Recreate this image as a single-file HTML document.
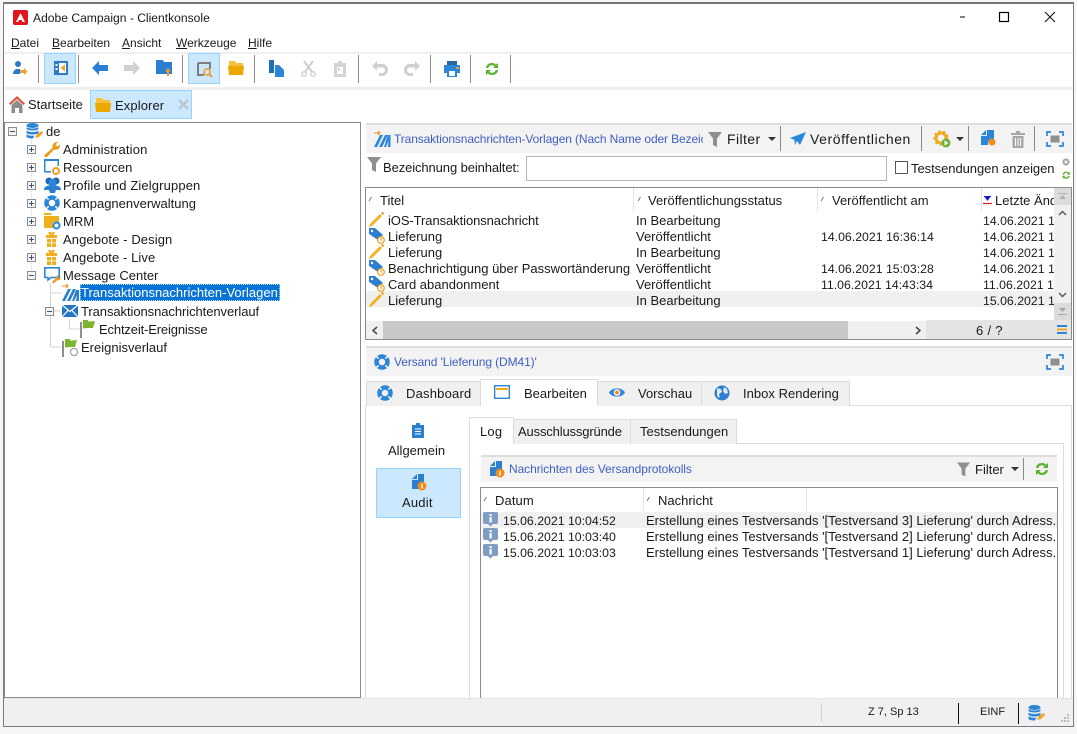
<!DOCTYPE html>
<html lang="de"><head><meta charset="utf-8"><title>Adobe Campaign</title>
<style>
html,body{margin:0;padding:0;width:1077px;height:734px;overflow:hidden;background:#f6f6f6}
body{font-family:"Liberation Sans",sans-serif;font-size:13px;color:#1a1a1a;position:relative}
.b{position:absolute;box-sizing:border-box}
.t{position:absolute;white-space:nowrap;line-height:16px;height:16px}
.r{height:15px;overflow:hidden}
.d{font-size:12.3px}
svg{position:absolute;overflow:visible}
u{text-decoration:underline}
.sep{position:absolute;width:1px;background:#8a8a8a}
.lnk{color:#3f5fc4}
</style></head><body>
<div class="b" style="left:3px;top:2px;width:1071px;height:725px;background:#fff;border:1px solid #7a7a7a;border-top:2px solid #777"></div>

<!-- title -->
<svg style="left:13px;top:10px" width="15" height="15" viewBox="0 0 15 15"><rect width="15" height="15" rx="2" fill="#e3141c"/><path d="M7.5 3 L12 12 H9.5 L8.6 10 H6.2 L7.5 7.5 L5 12 H3Z" fill="#fff"/></svg>
<div class="t" style="left:33px;top:10px;font-size:12.1px">Adobe Campaign - Clientkonsole</div>
<svg style="left:960px;top:0" width="117" height="30"><path d="M0 17H5" stroke="#000"/><rect x="39.5" y="12.5" width="9" height="9" fill="none" stroke="#000" stroke-width="1.2"/><path d="M85 12L95 22M95 12L85 22" stroke="#111" stroke-width="1.1"/></svg>

<!-- menu -->
<div class="t" style="left:11px;top:35px;font-size:12px"><u>D</u>atei</div>
<div class="t" style="left:52px;top:35px;font-size:12px"><u>B</u>earbeiten</div>
<div class="t" style="left:122px;top:35px;font-size:12px"><u>A</u>nsicht</div>
<div class="t" style="left:176px;top:35px;font-size:12px"><u>W</u>erkzeuge</div>
<div class="t" style="left:248px;top:35px;font-size:12px"><u>H</u>ilfe</div>

<!-- toolbar -->
<div class="b" style="left:4px;top:52px;width:1069px;height:2px;background:#f0f0f0"></div>
<div class="b" style="left:4px;top:87px;width:1069px;height:3px;background:#f0f0f0"></div>
<div class="b" style="left:44px;top:53px;width:32px;height:31px;background:#cce8ff;border:1px solid #99d1ff"></div>
<div class="b" style="left:188px;top:53px;width:32px;height:31px;background:#cce8ff;border:1px solid #99d1ff"></div>
<div class="sep" style="left:38px;top:55px;height:28px"></div>
<div class="sep" style="left:78px;top:55px;height:28px"></div>
<div class="sep" style="left:182px;top:55px;height:28px"></div>
<div class="sep" style="left:254px;top:55px;height:28px"></div>
<div class="sep" style="left:358px;top:55px;height:28px"></div>
<div class="sep" style="left:430px;top:55px;height:28px"></div>
<div class="sep" style="left:470px;top:55px;height:28px"></div>
<div class="sep" style="left:510px;top:55px;height:28px"></div>
<svg style="left:12px;top:60px" width="16" height="16"><circle cx="6" cy="4" r="3" fill="#2c7ad0"/><path d="M1 14c0-3 2-4 3-5h4v5z" fill="#2c7ad0"/><path d="M8 10h4V8l3.500 3.500L12 15v-2H8z" fill="#f0a030"/></svg>
<svg style="left:54px;top:61px" width="14" height="14"><rect width="14" height="14" fill="#2a7bc8"/><rect x="5" y="2" width="7" height="10" fill="#fff"/><path d="M11 3.500V10.500L6.500 7z" fill="#f2a32c"/><rect x="1.500" y="3" width="2" height="2" fill="#fff"/><rect x="1.500" y="7" width="2" height="2" fill="#fff"/></svg>
<svg style="left:92px;top:61px" width="16" height="14"><path d="M0 7L7 0V4H16V10H7V14Z" fill="#2c7ed4"/></svg>
<svg style="left:124px;top:61px" width="16" height="14"><path d="M16 7L9 0V4H0V10H9V14Z" fill="#d0d0d0"/></svg>
<svg style="left:156px;top:60px" width="16" height="16"><path d="M0 0H7L8 2H16V14H0Z" fill="#2c7ed4"/><path d="M12 8l3 3.500h-2V16h-2v-4.500H9z" fill="#f29a1c"/></svg>
<svg style="left:197px;top:62px" width="16" height="16"><path d="M1 1H13V7M7 13H1V1" fill="none" stroke="#7d7d7d" stroke-width="2"/><circle cx="10" cy="10" r="3" fill="none" stroke="#ef9a1a" stroke-width="1.500"/><path d="M12 12l3 3" stroke="#ef9a1a" stroke-width="1.800"/></svg>
<svg style="left:228px;top:61px" width="16" height="14"><path d="M1 0H7L8 2H15V6H1Z" fill="#f6c03a"/><path d="M0 5H16L15 14H1Z" fill="#eaa800"/></svg>
<svg style="left:269px;top:60px" width="15" height="17"><path d="M0 0H5V13H0Z" fill="#1f6fb8"/><path d="M6 5H10L15 10V17H6Z" fill="#2c86d8"/></svg>
<svg style="left:301px;top:61px" width="15" height="16"><path d="M3 0L11 11M12 0L4 11" stroke="#cfcfcf" stroke-width="2"/><circle cx="3" cy="13" r="2.200" fill="none" stroke="#cfcfcf" stroke-width="1.300"/><circle cx="12" cy="13" r="2.200" fill="none" stroke="#cfcfcf" stroke-width="1.300"/></svg>
<svg style="left:334px;top:61px" width="12" height="16"><path d="M0 2H4V0H8V2H12V16H0Z" fill="#d4d4d4"/><rect x="3" y="6" width="6" height="7" fill="#fff"/><rect x="4" y="7" width="2" height="3" fill="#d4d4d4"/></svg>
<svg style="left:372px;top:61px" width="16" height="15"><path d="M0 5L5 0V3H10C14 3 16 6 16 9C16 12 14 15 10 15H7V12H10C12 12 13 10.500 13 9C13 7.500 12 6.500 10 6.500H5V10Z" fill="#d0d0d0"/></svg>
<svg style="left:404px;top:61px" width="16" height="15"><path d="M16 5L11 0V3H6C2 3 0 6 0 9C0 12 2 15 6 15H9V12H6C4 12 3 10.500 3 9C3 7.500 4 6.500 6 6.500H11V10Z" fill="#d0d0d0"/></svg>
<svg style="left:444px;top:61px" width="16" height="16"><rect x="3" y="0" width="10" height="4" fill="#2468a8"/><path d="M0 4H16V12H13V9H3V12H0Z" fill="#2c86d8"/><rect x="12" y="6" width="3" height="2" fill="#f0a030"/><path d="M3 9H13V16H3Z" fill="#2c86d8"/><rect x="5" y="10" width="6" height="5" fill="#fff"/></svg>
<svg style="left:485px;top:62px" width="14" height="14" viewBox="0 0 14 14"><path d="M1 6C1.500 2.500 4 1 7 1c2 0 3.200 .8 4 1.800L13 1V6H8l1.700-1.600C9 3.600 8.200 3.200 7 3.200 5 3.200 3.800 4.300 3.300 6Z" fill="#5cb030"/><path d="M13 8C12.500 11.500 10 13 7 13c-2 0-3.200-.8-4-1.800L1 13V8H6L4.300 9.600C5 10.400 5.800 10.800 7 10.800c2 0 3.200-1.100 3.700-2.800Z" fill="#5cb030"/></svg>

<!-- doc tabs -->
<svg style="left:9px;top:96px" width="16" height="17"><path d="M8 0L0 7.500 1.500 9 8 3 14.500 9 16 7.500Z" fill="#e0533c"/><path d="M2.500 9L8 4 13.500 9V17H10V12H6V17H2.500Z" fill="#8c8c8c"/></svg>
<div class="t" style="left:28px;top:97px">Startseite</div>
<div class="b" style="left:90px;top:90px;width:102px;height:29px;background:#cce8ff;border:1px solid #99d1ff"></div>
<svg style="left:95px;top:98px" width="16" height="14"><path d="M1 0H7L8 2H15V6H1Z" fill="#f6c03a"/><path d="M0 5H16L15 14H1Z" fill="#eaa800"/></svg>
<div class="t" style="left:115px;top:98px;letter-spacing:.1px">Explorer</div>
<svg style="left:178px;top:99px" width="11" height="11"><path d="M1 1L10 10M10 1L1 10" stroke="#bcc7cf" stroke-width="2.400"/></svg>

<!-- left tree -->
<div class="b" style="left:4px;top:122px;width:357px;height:576px;border:1px solid #8a8a8a;background:#fff"></div>
<svg style="left:0;top:0" width="360" height="360" stroke="#d4d4d4" fill="none">
<path d="M31.500 139V275" stroke-dasharray="1 1"/>
<path d="M50.500 283V347M50.500 293H62M50.500 311H60M50.500 347H62M69.500 319V329H80" stroke-width="1"/>
</svg>
<svg width="0" height="0"><defs>
<g id="pl"><rect x=".5" y=".5" width="8" height="8" fill="#f4f4f4" stroke="#8c8c8c"/><path d="M2 4.500H7M4.500 2V7" stroke="#33537a"/></g>
<g id="mi"><rect x=".5" y=".5" width="8" height="8" fill="#f4f4f4" stroke="#8c8c8c"/><path d="M2 4.500H7" stroke="#33537a"/></g>
<g id="gift"><path d="M4 0H7L7.500 2 8 0H11L9.500 3H13V6H2V3H5.500Z" fill="#f2ad1a"/><rect x="3" y="7" width="9" height="8" fill="#f2ad1a"/><rect x="7" y="7" width="1" height="8" fill="#fff"/><rect x="3" y="10.500" width="9" height=".8" fill="#fff"/></g>
<g id="tag"><path d="M0 0H6L14 7 9 12 0 6Z" fill="#2c80cf"/><circle cx="3" cy="3" r="1.200" fill="#fff"/><circle cx="12" cy="12" r="3.300" fill="#fff" stroke="#f29a1c" stroke-width="1.200"/><path d="M12 10V12H13.500" stroke="#f29a1c" fill="none"/></g>
<g id="pen"><path d="M0 15L1 12 11 2 13 4 3 14Z" fill="#f2b21f"/><path d="M12 1L13.500 0 15 1.500 14 3Z" fill="#e08a10"/></g>
<g id="info"><path d="M2 0H13C14.500 0 15 .7 15 2V10C15 11.300 14.500 12 13 12H10L7.500 14.500 5 12H2C.7 12 0 11.300 0 10V2C0 .7 .7 0 2 0Z" fill="#7f9cc4"/><rect x="6.500" y="5" width="2.200" height="5.500" fill="#fff"/><rect x="6.500" y="2" width="2.200" height="2" fill="#fff"/></g>
<g id="ring"><circle cx="8" cy="8" r="5.500" fill="none" stroke="#2c86d8" stroke-width="4.500"/><path d="M8 0V3.200M8 12.800V16M0 8H3.200M12.800 8H16" stroke="#fff" stroke-width="1.500" transform="rotate(45 8 8)"/></g>
<g id="fs"><path d="M0 4V0H4M12 0H16V4M16 10V14H12M4 14H0V10" fill="none" stroke="#2c86d8" stroke-width="1.700"/><rect x="3.500" y="3.500" width="9" height="7" fill="#8f8f8f"/></g>
<g id="filt"><path d="M0 0H14L9 6.500V15L5 13V6.500Z" fill="#8f8f8f"/></g>
<g id="flag"><rect x="0" y="2" width="2" height="16" fill="#8f8f8f"/><path d="M3 0H8V1.500H10L15 1 13 8H8L3 8.500Z" fill="#7fb52e"/></g>
</defs></svg>
<svg style="left:8px;top:127px" width="9" height="9"><use href="#mi"/></svg>
<svg style="left:27px;top:145px" width="9" height="9"><use href="#pl"/></svg>
<svg style="left:27px;top:163px" width="9" height="9"><use href="#pl"/></svg>
<svg style="left:27px;top:181px" width="9" height="9"><use href="#pl"/></svg>
<svg style="left:27px;top:199px" width="9" height="9"><use href="#pl"/></svg>
<svg style="left:27px;top:217px" width="9" height="9"><use href="#pl"/></svg>
<svg style="left:27px;top:235px" width="9" height="9"><use href="#pl"/></svg>
<svg style="left:27px;top:253px" width="9" height="9"><use href="#pl"/></svg>
<svg style="left:27px;top:271px" width="9" height="9"><use href="#mi"/></svg>
<svg style="left:45px;top:307px" width="9" height="9"><use href="#mi"/></svg>

<svg style="left:26px;top:123px" width="17" height="16"><ellipse cx="6.500" cy="2.500" rx="6" ry="2.500" fill="#2c86d8"/><path d="M.5 4c2 2 10 2 12 0V6c-2 2-10 2-12 0zM.5 7.500c2 2 10 2 12 0V10c-2 2-10 2-12 0zM.5 11c2 2 6 2 8 1.500L7 15.500C4 15.500 .5 15 .5 13.500z" fill="#2c86d8"/><path d="M9 15L11 11 16 8 17 10 13 14Z" fill="#f2a41f"/></svg>
<div class="t" style="left:46px;top:124px">de</div>
<svg style="left:44px;top:141px" width="17" height="17"><path d="M1 16L0 14.500 8.500 7C8 4 9.500 .5 14 1L11.500 3.500 13.500 5.500 16 3.500C16.500 7.500 13 9.500 10 8.500L2.500 16.500Z" fill="#ef9a1a"/></svg>
<div class="t" style="left:63px;top:142px;letter-spacing:.15px">Administration</div>
<svg style="left:44px;top:159px" width="17" height="17"><path d="M0 0H15V2H0ZM0 2H1.500V12H7V13.500H0ZM13.500 2H15V7H13.500Z" fill="#2c86d8"/><circle cx="12" cy="12" r="3" fill="none" stroke="#f0a020" stroke-width="2"/></svg>
<div class="t" style="left:63px;top:160px">Ressourcen</div>
<svg style="left:44px;top:177px" width="17" height="16"><circle cx="5" cy="4" r="3.500" fill="#1d68b4"/><circle cx="12" cy="4" r="3.500" fill="#1d68b4"/><circle cx="8.500" cy="6" r="4" fill="#2c86d8"/><path d="M0 13C0 10 2 9 5 8.500H12C15 9 17 10 17 13L12 13 11 16H6L5 13Z" fill="#2c7ed0"/></svg>
<div class="t" style="left:63px;top:178px;letter-spacing:.13px">Profile und Zielgruppen</div>
<svg style="left:44px;top:195px" width="16" height="16"><use href="#ring"/></svg>
<div class="t" style="left:63px;top:196px">Kampagnenverwaltung</div>
<svg style="left:44px;top:213px" width="17" height="17"><path d="M0 0H7L8 2H0ZM0 3H15V9H9V15H0Z" fill="#f0b01e"/><circle cx="12.500" cy="12.500" r="3" fill="#fff" stroke="#2c86d8" stroke-width="2"/></svg>
<div class="t" style="left:63px;top:214px">MRM</div>
<svg style="left:44px;top:232px" width="16" height="16"><use href="#gift"/></svg>
<div class="t" style="left:63px;top:232px;letter-spacing:.1px">Angebote - Design</div>
<svg style="left:44px;top:250px" width="16" height="16"><use href="#gift"/></svg>
<div class="t" style="left:63px;top:250px;letter-spacing:.08px">Angebote - Live</div>
<svg style="left:44px;top:267px" width="17" height="16"><path d="M.8 .8H15.200V10.500H7L4 13V10.500H.8Z" fill="#fff" stroke="#2c86d8" stroke-width="1.600"/><path d="M8 15L12 11C11.500 9.500 13 8 15 8.500L13.500 10 15 11.500 16.500 10.500C17 12.500 15 14 13.500 13L9.500 16.500Z" fill="#ef9a1a"/></svg>
<div class="t" style="left:63px;top:268px">Message Center</div>
<svg style="left:62px;top:284px" width="17" height="18"><path d="M0 2H5M4 0L6 2 4 4" stroke="#ef8a1a" fill="none"/><path d="M0 17L6 5H9L3 17ZM5 17L11 5H14L8 17ZM10 17L14 6H17V17H14L15 11 12 17Z" fill="#2c7ed0"/></svg>
<div class="b" style="left:80px;top:284px;width:200px;height:17px;background:#0a74d6;outline:1px dotted #bfe0ff;outline-offset:-1px"></div>
<div class="t" style="left:81px;top:285px;color:#fff">Transaktionsnachrichten-Vorlagen</div>
<svg style="left:62px;top:305px" width="16" height="12"><rect width="16" height="12" fill="#2476c4"/><path d="M0 0L8 6.500 16 0M0 12L6 5.500M16 12L10 5.500" stroke="#fff" fill="none" stroke-width="1.200"/></svg>
<div class="t" style="left:81px;top:304px;letter-spacing:-.07px">Transaktionsnachrichtenverlauf</div>
<svg style="left:80px;top:320px" width="16" height="18"><use href="#flag"/></svg>
<div class="t" style="left:99px;top:322px;letter-spacing:-.15px">Echtzeit-Ereignisse</div>
<svg style="left:62px;top:339px" width="17" height="18"><use href="#flag"/><circle cx="12" cy="13" r="3.500" fill="#fff" stroke="#8f8f8f"/></svg>
<div class="t" style="left:81px;top:340px">Ereignisverlauf</div>

<!-- upper right -->
<div class="b" style="left:366px;top:123px;width:706px;height:2px;background:#dedede"></div>
<div class="b" style="left:366px;top:125px;width:706px;height:28px;background:#f3f3f3"></div>
<svg style="left:374px;top:131px" width="17" height="17"><path d="M0 2H5M4 0L6 2 4 4" stroke="#ef8a1a" fill="none"/><path d="M0 16L6 4H9L3 16ZM5 16L11 4H14L8 16ZM10 16L14 4H16.500V16H14L14.500 10 12 16Z" fill="#2c86d8"/></svg>
<div class="b" style="left:394px;top:131px;width:309px;height:16px;overflow:hidden"><div class="t lnk" style="left:0;top:0;font-size:12px;letter-spacing:-.12px">Transaktionsnachrichten-Vorlagen (Nach Name oder Bezeichnung)</div></div>
<svg style="left:708px;top:132px" width="14" height="15"><use href="#filt"/></svg>
<div class="t" style="left:727px;top:131px;font-size:14px;letter-spacing:.4px">Filter</div>
<svg style="left:768px;top:137px" width="8" height="5"><path d="M0 0H8L4 4Z" fill="#333"/></svg>
<div class="sep" style="left:780px;top:126px;height:25px"></div>
<svg style="left:790px;top:132px" width="16" height="14"><path d="M0 6L16 0 10 13 7 9 5 13 4.500 8Z" fill="#2c86d8"/></svg>
<div class="t" style="left:810px;top:131px;font-size:14px;letter-spacing:.57px">Veröffentlichen</div>
<div class="sep" style="left:921px;top:126px;height:25px"></div>
<svg style="left:934px;top:131px" width="17" height="17"><circle cx="7" cy="7" r="5" fill="none" stroke="#f0ac1e" stroke-width="3"/><circle cx="7" cy="7" r="7" fill="none" stroke="#f0ac1e" stroke-width="1.500" stroke-dasharray="2.500 2.500"/><circle cx="12" cy="12" r="4.500" fill="#6cb33c"/><path d="M10.500 9.500L14.500 12 10.500 14.500Z" fill="#fff"/></svg>
<svg style="left:956px;top:137px" width="8" height="5"><path d="M0 0H8L4 4Z" fill="#333"/></svg>
<div class="sep" style="left:968px;top:126px;height:25px"></div>
<svg style="left:981px;top:130px" width="15" height="18"><path d="M0 5L5 0V5ZM6 0H13V9A5 5 0 0 0 7 15H0V6H6Z" fill="#2c86d8"/><circle cx="11" cy="12" r="3.500" fill="#f08c1a"/></svg>
<svg style="left:1011px;top:131px" width="14" height="17"><path d="M5 0H9V2H14V4H0V2H5ZM1.500 5H12.500V17H1.500Z" fill="#a8a8a8"/><path d="M4.500 7V15M7 7V15M9.500 7V15" stroke="#fff"/></svg>
<div class="sep" style="left:1034px;top:126px;height:25px"></div>
<svg style="left:1047px;top:132px" width="16" height="14"><use href="#fs"/></svg>

<svg style="left:367px;top:157px" width="14" height="15"><use href="#filt"/></svg>
<div class="t" style="left:383px;top:160px;letter-spacing:-.1px">Bezeichnung beinhaltet:</div>
<div class="b" style="left:526px;top:156px;width:361px;height:25px;border:1px solid #b4b4b4;background:#fff"></div>
<div class="b" style="left:895px;top:161px;width:13px;height:13px;border:1px solid #555;background:#fff"></div>
<div class="t" style="left:911px;top:161px;letter-spacing:-.05px">Testsendungen anzeigen</div>
<svg style="left:1062px;top:158px" width="9" height="22"><circle cx="4" cy="4" r="3.500" fill="#a0a0a0"/><path d="M2.500 2.500L5.500 5.500M5.500 2.500L2.500 5.500" stroke="#fff"/><g transform="translate(0 13) scale(.6)"><path d="M1 6C1.500 2.500 4 1 7 1c2 0 3.200 .8 4 1.800L13 1V6H8l1.700-1.600C9 3.600 8.200 3.200 7 3.200 5 3.200 3.800 4.300 3.300 6Z" fill="#5cb030"/><path d="M13 8C12.500 11.500 10 13 7 13c-2 0-3.200-.8-4-1.800L1 13V8H6L4.300 9.600C5 10.400 5.800 10.800 7 10.800c2 0 3.200-1.100 3.700-2.800Z" fill="#5cb030"/></g></svg>

<div class="b" style="left:365px;top:187px;width:707px;height:153px;border:1px solid #8a8a8a;background:#fff"></div>
<div class="b" style="left:633px;top:188px;width:1px;height:23px;background:#e3e3e3"></div>
<div class="b" style="left:817px;top:188px;width:1px;height:23px;background:#e3e3e3"></div>
<div class="b" style="left:981px;top:188px;width:1px;height:23px;background:#e3e3e3"></div>
<svg style="left:368px;top:196px" width="700" height="8" stroke="#777" fill="none"><path d="M1 5L3.500 1M270 5L272.500 1M453 5L455.500 1"/></svg>
<div class="t" style="left:380px;top:193px">Titel</div>
<div class="t" style="left:648px;top:193px">Veröffentlichungsstatus</div>
<div class="t" style="left:832px;top:193px">Veröffentlicht am</div>
<svg style="left:983px;top:196px" width="9" height="9"><path d="M1 0H8L4.500 5Z" fill="#1414d8"/><path d="M1 0H8V1H1Z" fill="#1414d8"/><path d="M0 7.500H9" stroke="#e81818" stroke-width="1.200"/></svg>
<div class="b" style="left:995px;top:193px;width:59px;height:16px;overflow:hidden"><div class="t" style="left:0;top:0">Letzte Änderung</div></div>
<div class="b" style="left:366px;top:291px;width:688px;height:16px;background:#f0f0f0"></div>
<svg style="left:369px;top:212px" width="16" height="16"><use href="#pen"/></svg>
<svg style="left:369px;top:228px" width="16" height="16"><use href="#tag"/></svg>
<svg style="left:369px;top:244px" width="16" height="16"><use href="#pen"/></svg>
<svg style="left:369px;top:260px" width="16" height="16"><use href="#tag"/></svg>
<svg style="left:369px;top:276px" width="16" height="16"><use href="#tag"/></svg>
<svg style="left:369px;top:292px" width="16" height="16"><use href="#pen"/></svg>
<div class="t r" style="left:388px;top:213px;letter-spacing:-.08px">iOS-Transaktionsnachricht</div>
<div class="t r" style="left:388px;top:229px">Lieferung</div>
<div class="t r" style="left:388px;top:245px">Lieferung</div>
<div class="t r" style="left:388px;top:261px">Benachrichtigung über Passwortänderung</div>
<div class="t r" style="left:388px;top:277px">Card abandonment</div>
<div class="t r" style="left:388px;top:293px">Lieferung</div>
<div class="t r" style="left:636px;top:213px">In Bearbeitung</div>
<div class="t r" style="left:636px;top:229px">Veröffentlicht</div>
<div class="t r" style="left:636px;top:245px">In Bearbeitung</div>
<div class="t r" style="left:636px;top:261px">Veröffentlicht</div>
<div class="t r" style="left:636px;top:277px">Veröffentlicht</div>
<div class="t r" style="left:636px;top:293px">In Bearbeitung</div>
<div class="t r d" style="left:821px;top:229px">14.06.2021 16:36:14</div>
<div class="t r d" style="left:821px;top:261px">14.06.2021 15:03:28</div>
<div class="t r d" style="left:821px;top:277px">11.06.2021 14:43:34</div>
<div class="b d" style="left:983px;top:212px;width:71px;height:96px;overflow:hidden">
<div class="t" style="left:0;top:1px">14.06.2021 16:36</div><div class="t" style="left:0;top:17px">14.06.2021 16:36</div><div class="t" style="left:0;top:33px">14.06.2021 16:36</div><div class="t" style="left:0;top:49px">14.06.2021 15:03</div><div class="t" style="left:0;top:65px">11.06.2021 14:43</div><div class="t" style="left:0;top:81px">15.06.2021 10:04</div></div>
<!-- v scroll -->
<div class="b" style="left:1054px;top:188px;width:17px;height:132px;background:#f0f0f0"></div>
<div class="b" style="left:1054px;top:188px;width:17px;height:17px;background:#dcdcdc"></div>
<div class="b" style="left:1054px;top:303px;width:17px;height:17px;background:#dcdcdc"></div>
<svg style="left:1054px;top:188px" width="17" height="132" fill="none"><path d="M4 5.500H13" stroke="#b0b0b0"/><path d="M5 11H12L8.500 7Z" fill="#b0b0b0"/><path d="M5 27L8.500 23.500 12 27" stroke="#555" stroke-width="1.400"/><path d="M5 105L8.500 108.500 12 105" stroke="#555" stroke-width="1.400"/><path d="M5 120H12L8.500 124Z" fill="#a8a8a8"/><path d="M4 126.500H13" stroke="#a8a8a8"/></svg>
<!-- h scroll -->
<div class="b" style="left:366px;top:321px;width:705px;height:18px;background:#f0f0f0"></div>
<div class="b" style="left:383px;top:321px;width:465px;height:18px;background:#c8c8c8"></div>
<div class="b" style="left:926px;top:320px;width:145px;height:19px;background:#e4e4e4"></div>
<svg style="left:371px;top:326px" width="8" height="9" fill="none"><path d="M6 1L2 4.500 6 8" stroke="#444" stroke-width="1.500"/></svg>
<svg style="left:914px;top:326px" width="8" height="9" fill="none"><path d="M2 1L6 4.500 2 8" stroke="#444" stroke-width="1.500"/></svg>
<div class="t" style="left:976px;top:323px;letter-spacing:.3px">6 / ?</div>
<svg style="left:1057px;top:325px" width="10" height="9"><rect width="10" height="2" fill="#2c86d8"/><rect y="3.500" width="10" height="2" fill="#f0ac1e"/><rect y="7" width="10" height="2" fill="#2c86d8"/></svg>

<!-- lower -->
<div class="b" style="left:366px;top:346px;width:706px;height:2px;background:#dedede"></div>
<div class="b" style="left:366px;top:348px;width:706px;height:28px;background:#f3f3f3"></div>
<svg style="left:374px;top:354px" width="16" height="16"><use href="#ring"/></svg>
<div class="t lnk" style="left:394px;top:354px;font-size:12px;letter-spacing:-.1px">Versand 'Lieferung (DM41)'</div>
<svg style="left:1047px;top:355px" width="16" height="14"><use href="#fs"/></svg>

<div class="b" style="left:365px;top:405px;width:707px;height:294px;border:1px solid #dcdcdc;border-bottom:0;background:#fff"></div>
<div class="b" style="left:366px;top:381px;width:115px;height:25px;background:#f0f0f0;border:1px solid #dcdcdc;border-bottom:0"></div>
<div class="b" style="left:597px;top:381px;width:105px;height:25px;background:#f0f0f0;border:1px solid #dcdcdc;border-bottom:0"></div>
<div class="b" style="left:701px;top:381px;width:149px;height:25px;background:#f0f0f0;border:1px solid #dcdcdc;border-bottom:0"></div>
<div class="b" style="left:480px;top:379px;width:118px;height:27px;background:#fff;border:1px solid #dcdcdc;border-bottom:0"></div>
<svg style="left:377px;top:385px" width="16" height="16"><use href="#ring"/></svg>
<div class="t" style="left:406px;top:386px;letter-spacing:.2px">Dashboard</div>
<svg style="left:494px;top:385px" width="16" height="14"><rect x=".7" y=".7" width="14.600" height="12.600" fill="#fff" stroke="#2c86d8" stroke-width="1.400"/><rect x="2" y="3" width="12" height="2" fill="#f0ac1e"/></svg>
<div class="t" style="left:524px;top:386px">Bearbeiten</div>
<svg style="left:609px;top:387px" width="16" height="11"><path d="M0 5.500C3 0 13 0 16 5.500 13 11 3 11 0 5.500Z" fill="#2c86d8"/><circle cx="8" cy="5.500" r="3.300" fill="#fff"/><circle cx="8" cy="5.500" r="2" fill="#f08c1a"/></svg>
<div class="t" style="left:638px;top:386px">Vorschau</div>
<svg style="left:714px;top:385px" width="16" height="16"><circle cx="8" cy="8" r="7.500" fill="#2c7ed0"/><path d="M3 3L7 4 8 7 5 9 6 13 3 11ZM10 2L13 4 14 8 11 9 9 6Z" fill="#dfeaf5"/></svg>
<div class="t" style="left:743px;top:386px;letter-spacing:.03px">Inbox Rendering</div>

<svg style="left:412px;top:423px" width="13" height="16"><path d="M0 2H4V0H8V2H12V15H0Z" fill="#2c7ed0"/><path d="M3 6H9M3 8.500H9M3 11H9" stroke="#fff"/></svg>
<div class="t" style="left:388px;top:443px">Allgemein</div>
<div class="b" style="left:376px;top:468px;width:85px;height:50px;background:#cce8ff;border:1px solid #99d1ff"></div>
<svg style="left:412px;top:474px" width="15" height="17"><path d="M0 5L5 0V5ZM6 0H12V9A5 5 0 0 0 7 15H0V6H6Z" fill="#2c7ed0"/><circle cx="10" cy="12" r="4.500" fill="#f08c1a"/><rect x="9.300" y="10" width="1.400" height="4.500" fill="#fff"/></svg>
<div class="t" style="left:402px;top:495px;letter-spacing:.2px">Audit</div>

<div class="b" style="left:469px;top:443px;width:595px;height:256px;border:1px solid #dcdcdc;border-bottom:0;background:#fff"></div>
<div class="b" style="left:513px;top:419px;width:118px;height:25px;background:#f0f0f0;border:1px solid #dcdcdc;border-bottom:0"></div>
<div class="b" style="left:630px;top:419px;width:107px;height:25px;background:#f0f0f0;border:1px solid #dcdcdc;border-bottom:0"></div>
<div class="b" style="left:469px;top:417px;width:45px;height:27px;background:#fff;border:1px solid #dcdcdc;border-bottom:0"></div>
<div class="t" style="left:480px;top:424px;letter-spacing:.2px">Log</div>
<div class="t" style="left:518px;top:424px;letter-spacing:-.15px">Ausschlussgründe</div>
<div class="t" style="left:640px;top:424px">Testsendungen</div>

<div class="b" style="left:481px;top:455px;width:576px;height:2px;background:#dedede"></div>
<div class="b" style="left:481px;top:457px;width:576px;height:25px;background:#f3f3f3"></div>
<svg style="left:490px;top:461px" width="15" height="17"><path d="M0 5L5 0V5ZM6 0H12V9A5 5 0 0 0 7 15H0V6H6Z" fill="#2c7ed0"/><circle cx="10" cy="12" r="4.500" fill="#f08c1a"/><rect x="9.300" y="10" width="1.400" height="4.500" fill="#fff"/></svg>
<div class="t lnk" style="left:509px;top:461px;font-size:12px;letter-spacing:-.08px">Nachrichten des Versandprotokolls</div>
<svg style="left:957px;top:462px" width="13" height="15" viewBox="0 0 14 15"><use href="#filt"/></svg>
<div class="t" style="left:975px;top:462px">Filter</div>
<svg style="left:1011px;top:467px" width="8" height="5"><path d="M0 0H8L4 4Z" fill="#333"/></svg>
<div class="sep" style="left:1023px;top:458px;height:22px"></div>
<svg style="left:1035px;top:462px" width="14" height="14" viewBox="0 0 14 14"><path d="M1 6C1.500 2.500 4 1 7 1c2 0 3.200 .8 4 1.800L13 1V6H8l1.700-1.600C9 3.600 8.200 3.200 7 3.200 5 3.200 3.800 4.300 3.300 6Z" fill="#5cb030"/><path d="M13 8C12.500 11.500 10 13 7 13c-2 0-3.200-.8-4-1.800L1 13V8H6L4.300 9.600C5 10.400 5.800 10.800 7 10.800c2 0 3.200-1.100 3.700-2.800Z" fill="#5cb030"/></svg>

<div class="b" style="left:480px;top:487px;width:578px;height:212px;border:1px solid #8a8a8a;border-bottom:0;background:#fff"></div>
<div class="b" style="left:643px;top:488px;width:1px;height:23px;background:#e3e3e3"></div>
<div class="b" style="left:806px;top:488px;width:1px;height:23px;background:#e3e3e3"></div>
<svg style="left:483px;top:496px" width="180" height="8" stroke="#777" fill="none"><path d="M1 5L3.500 1M164 5L166.500 1"/></svg>
<div class="t" style="left:495px;top:493px;letter-spacing:.1px">Datum</div>
<div class="t" style="left:658px;top:493px">Nachricht</div>
<div class="b" style="left:481px;top:512px;width:576px;height:16px;background:#f0f0f0"></div>
<svg style="left:483px;top:512px" width="15" height="15"><use href="#info"/></svg>
<svg style="left:483px;top:528px" width="15" height="15"><use href="#info"/></svg>
<svg style="left:483px;top:544px" width="15" height="15"><use href="#info"/></svg>
<div class="t r d" style="left:503px;top:513px">15.06.2021 10:04:52</div>
<div class="t r d" style="left:503px;top:529px">15.06.2021 10:03:40</div>
<div class="t r d" style="left:503px;top:545px">15.06.2021 10:03:03</div>
<div class="b" style="left:646px;top:512px;width:411px;height:48px;overflow:hidden">
<div class="t r" style="left:0;top:1px">Erstellung eines Testversands '[Testversand 3] Lieferung' durch Adress.</div>
<div class="t r" style="left:0;top:17px">Erstellung eines Testversands '[Testversand 2] Lieferung' durch Adress.</div>
<div class="t r" style="left:0;top:33px">Erstellung eines Testversands '[Testversand 1] Lieferung' durch Adress.</div></div>

<!-- status bar -->
<div class="b" style="left:4px;top:698px;width:1069px;height:28px;background:#f0f0f0;border-top:1px solid #e4e4e4"></div>
<div class="b" style="left:821px;top:703px;width:1px;height:19px;background:#d4d4d4"></div>
<div class="b" style="left:958px;top:703px;width:1px;height:21px;background:#111"></div>
<div class="b" style="left:1018px;top:703px;width:1px;height:21px;background:#111"></div>
<div class="t" style="left:868px;top:704px;font-size:11px">Z 7, Sp 13</div>
<div class="t" style="left:980px;top:704px;font-size:11px">EINF</div>
<svg style="left:1028px;top:705px" width="17" height="17"><ellipse cx="6.500" cy="2.500" rx="6" ry="2.500" fill="#2c86d8"/><path d="M.5 4c2 2 10 2 12 0V6c-2 2-10 2-12 0zM.5 7.500c2 2 10 2 12 0V10c-2 2-10 2-12 0zM.5 11c2 2 6 2 8 1.500L7 15.500C4 15.500 .5 15 .5 13.500z" fill="#2c86d8"/><path d="M9 15L11 11 16 8 17 10 13 14Z" fill="#f2a41f"/></svg>
<svg style="left:1061px;top:714px" width="9" height="9" fill="#bdbdbd"><rect x="6" y="0" width="2" height="2"/><rect x="3" y="3" width="2" height="2"/><rect x="6" y="3" width="2" height="2"/><rect x="0" y="6" width="2" height="2"/><rect x="3" y="6" width="2" height="2"/><rect x="6" y="6" width="2" height="2"/></svg>
</body></html>
